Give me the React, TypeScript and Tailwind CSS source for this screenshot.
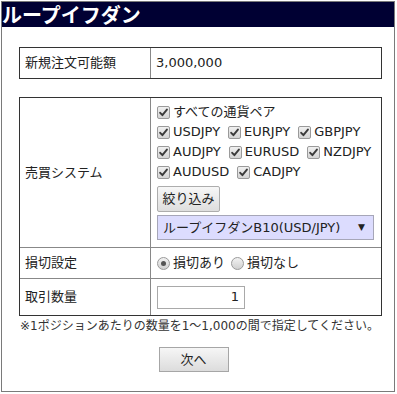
import React from "react";

const FONT = '"DejaVu Sans", "Noto Sans CJK JP", sans-serif';

function Check() {
  return (
    <span className="inline-flex h-[13px] w-[13px] shrink-0 items-center justify-center rounded-[2px] border border-[#9a9a9a] bg-gradient-to-b from-[#f0f0f0] to-[#d4d4d4]">
      <svg width="9" height="9" viewBox="0 0 9 9">
        <path d="M1.2 4.8 L3.4 7.2 L7.9 1.6" fill="none" stroke="#3a3a3a" strokeWidth="1.9" strokeLinecap="round" strokeLinejoin="round" />
      </svg>
    </span>
  );
}

function Radio({ on }: { on?: boolean }) {
  return (
    <span className="inline-flex h-[13px] w-[13px] shrink-0 items-center justify-center rounded-full border border-[#9a9a9a] bg-gradient-to-b from-[#f2f2f2] to-[#d0d0d0]">
      {on && <span className="h-[5px] w-[5px] rounded-full bg-[#555]" />}
    </span>
  );
}

function CB({ label, last }: { label: string; last?: boolean }) {
  return (
    <span className={"inline-flex items-center " + (last ? "" : "mr-[8px]")}>
      <Check />
      <span className="ml-[3px]">{label}</span>
    </span>
  );
}

export default function App() {
  return (
    <div className="h-[394px] w-[397px] bg-white pl-[1px] pt-[1px] text-[13px] text-[#222]" style={{ fontFamily: FONT }}>
      <div className="flex h-[391px] w-[394px] flex-col border border-[#7a7a7a]">
        <div className="flex h-[25px] items-start bg-[#000033] pl-0 pt-[1px] text-[20px] font-bold leading-[23px] text-white" style={{ fontFamily: '"Noto Sans CJK JP", sans-serif' }}>
          <span>ループイフダン</span>
        </div>
        <div className="flex flex-col pl-[17px] pt-[20px]">
          {/* table 1 */}
          <div className="flex h-[32px] w-[363px] border border-[#333]">
            <div className="flex w-[131px] items-center border-r border-[#888] pl-[5px]">新規注文可能額</div>
            <div className="flex flex-1 items-center pl-[5px]">3,000,000</div>
          </div>
          {/* table 2 */}
          <div className="mt-[18px] flex w-[363px] flex-col border border-[#333]">
            <div className="flex h-[149px]">
              <div className="flex w-[131px] items-center border-r border-[#888] pl-[5px]">売買システム</div>
              <div className="flex flex-1 flex-col pl-[6px] pt-[4px]">
                <div className="flex h-[20px] items-center">
                  <CB label="すべての通貨ペア" last />
                </div>
                <div className="flex h-[20px] items-center">
                  <CB label="USDJPY" />
                  <CB label="EURJPY" />
                  <CB label="GBPJPY" last />
                </div>
                <div className="flex h-[20px] items-center">
                  <CB label="AUDJPY" />
                  <CB label="EURUSD" />
                  <CB label="NZDJPY" last />
                </div>
                <div className="flex h-[20px] items-center">
                  <CB label="AUDUSD" />
                  <CB label="CADJPY" last />
                </div>
                <div className="mt-[4px] flex">
                  <div className="flex h-[26px] w-[63px] items-center justify-center rounded-[2px] border border-[#adadad] bg-gradient-to-b from-[#f7f7f7] to-[#dedede]">
                    絞り込み
                  </div>
                </div>
                <div className="mt-[3px] flex h-[25px] w-[217px] items-center justify-between border border-[#a6a6b8] bg-[#dcdcfe] pl-[5px] pr-[8px]">
                  <span>ループイフダンB10(USD/JPY)</span>
                  <span className="text-[9px]">▼</span>
                </div>
              </div>
            </div>
            <div className="flex h-[31px] border-t border-[#888]">
              <div className="flex w-[131px] items-center border-r border-[#888] pl-[5px]">損切設定</div>
              <div className="flex flex-1 items-center pl-[6px]">
                <Radio on />
                <span className="ml-[3px] mr-[6px]">損切あり</span>
                <Radio />
                <span className="ml-[3px]">損切なし</span>
              </div>
            </div>
            <div className="flex h-[37px] border-t border-[#888]">
              <div className="flex w-[131px] items-center border-r border-[#888] pl-[5px]">取引数量</div>
              <div className="flex flex-1 items-center pl-[6px]">
                <div className="flex h-[23px] w-[88px] items-center justify-end border border-[#a9a9a9] pr-[5px]">1</div>
              </div>
            </div>
          </div>
          <div className="mt-[2px] whitespace-nowrap pl-[1px] text-[12px] leading-[17px] text-[#333]">
            ※1ポジションあたりの数量を1〜1,000の間で指定してください。
          </div>
          <div className="mt-[12px] flex w-[363px] justify-center">
            <div className="ml-[-14px] flex h-[25px] w-[70px] items-center justify-center border border-[#a6a6a6] bg-gradient-to-b from-[#f6f6f6] to-[#dcdcdc]">
              次へ
            </div>
          </div>
        </div>
      </div>
    </div>
  );
}
